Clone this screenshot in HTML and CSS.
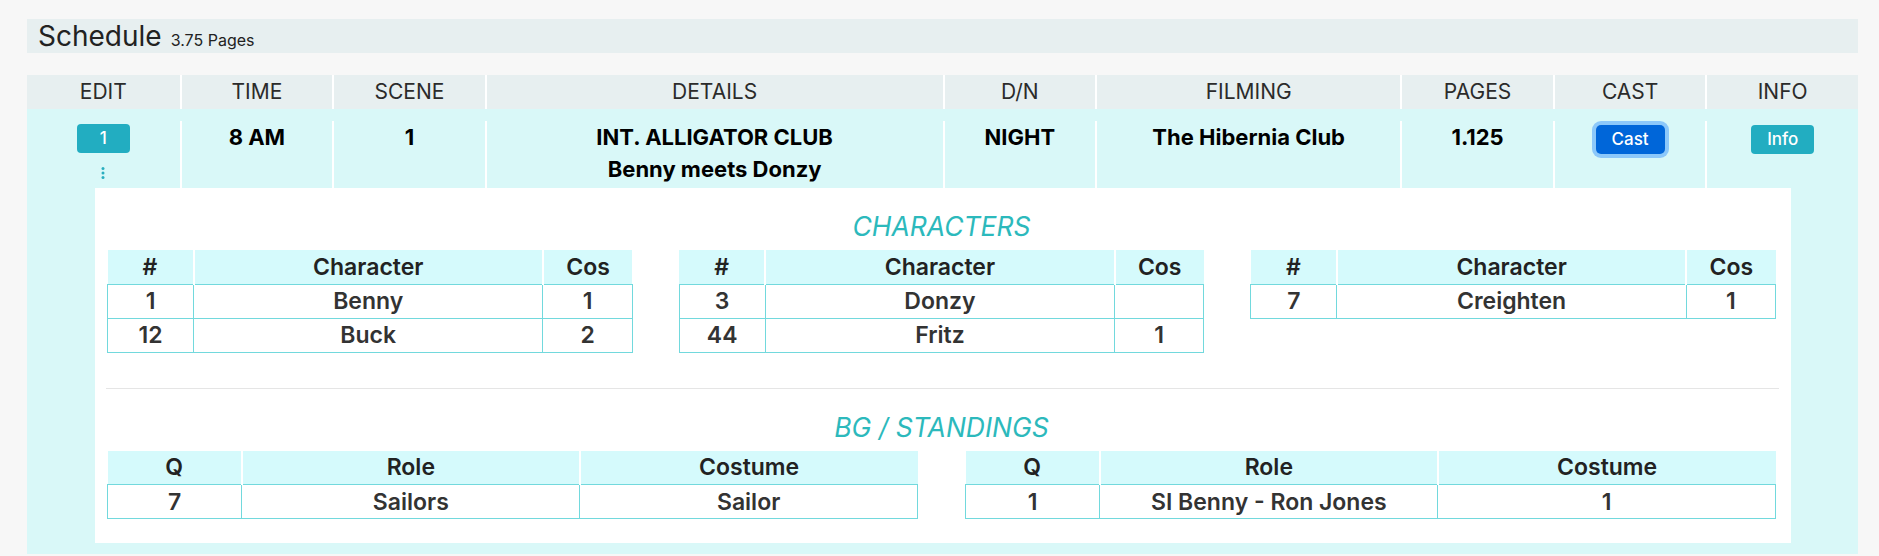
FILE: index.html
```html
<!DOCTYPE html>
<html lang="en">
<head>
<meta charset="utf-8">
<title>Schedule</title>
<link rel="stylesheet" href="styles.css">
</head>
<body>
<div class="page">
  <div class="titlebar"><span class="title">Schedule</span><span class="pages">3.75 Pages</span></div>
  <div class="sched">
    <div class="head-row">
      <div class="hcell">EDIT</div>
      <div class="hcell">TIME</div>
      <div class="hcell">SCENE</div>
      <div class="hcell">DETAILS</div>
      <div class="hcell">D/N</div>
      <div class="hcell">FILMING</div>
      <div class="hcell">PAGES</div>
      <div class="hcell">CAST</div>
      <div class="hcell">INFO</div>
    </div>
    <div class="scene">
      <div class="scene-row">
        <div class="cell cell-edit">
          <button class="btn btn-info btn-num">1</button>
          <svg class="kebab" viewBox="0 0 4 12" width="4" height="12"><circle cx="2" cy="1.6" r="1.5"/><circle cx="2" cy="6" r="1.5"/><circle cx="2" cy="10.4" r="1.5"/></svg>
        </div>
        <div class="cell">8 AM</div>
        <div class="cell">1</div>
        <div class="cell">INT. ALLIGATOR CLUB<br>Benny meets Donzy</div>
        <div class="cell">NIGHT</div>
        <div class="cell">The Hibernia Club</div>
        <div class="cell">1.125</div>
        <div class="cell"><button class="btn btn-primary">Cast</button></div>
        <div class="cell"><button class="btn btn-info">Info</button></div>
      </div>
      <div class="detail-card">
        <h3 class="section-title">CHARACTERS</h3>
        <div class="char-grid">
          <table class="sub">
            <colgroup><col class="c-num"><col class="c-name"><col class="c-cos"></colgroup>
            <thead><tr><th>#</th><th>Character</th><th>Cos</th></tr></thead>
            <tbody>
              <tr><td>1</td><td>Benny</td><td>1</td></tr>
              <tr><td>12</td><td>Buck</td><td>2</td></tr>
            </tbody>
          </table>
          <table class="sub">
            <colgroup><col class="c-num"><col class="c-name"><col class="c-cos"></colgroup>
            <thead><tr><th>#</th><th>Character</th><th>Cos</th></tr></thead>
            <tbody>
              <tr><td>3</td><td>Donzy</td><td></td></tr>
              <tr><td>44</td><td>Fritz</td><td>1</td></tr>
            </tbody>
          </table>
          <table class="sub">
            <colgroup><col class="c-num"><col class="c-name"><col class="c-cos"></colgroup>
            <thead><tr><th>#</th><th>Character</th><th>Cos</th></tr></thead>
            <tbody>
              <tr><td>7</td><td>Creighten</td><td>1</td></tr>
            </tbody>
          </table>
        </div>
        <hr class="divider">
        <h3 class="section-title">BG / STANDINGS</h3>
        <div class="bg-grid">
          <table class="sub">
            <colgroup><col class="c-q"><col class="c-role"><col class="c-cost"></colgroup>
            <thead><tr><th>Q</th><th>Role</th><th>Costume</th></tr></thead>
            <tbody>
              <tr><td>7</td><td>Sailors</td><td>Sailor</td></tr>
            </tbody>
          </table>
          <table class="sub">
            <colgroup><col class="c-q"><col class="c-role"><col class="c-cost"></colgroup>
            <thead><tr><th>Q</th><th>Role</th><th>Costume</th></tr></thead>
            <tbody>
              <tr><td>1</td><td>SI Benny - Ron Jones</td><td>1</td></tr>
            </tbody>
          </table>
        </div>
      </div>
    </div>
  </div>
</div>
</body>
</html>
```
FILE: styles.css
```css
* { box-sizing: border-box; }

body {
  margin: 0;
  background: #f7f7f7;
  font-family: Inter, "DejaVu Sans", sans-serif;
  color: #222;
}

.page {
  padding: 19px 21px 0 27px;
}

.titlebar {
  height: 34px;
  background: #e7eff0;
  padding-left: 11px;
  display: flex;
  align-items: baseline;
  line-height: 34px;
}

.title {
  font-size: 28px;
  font-weight: 400;
  color: #222;
}

.pages {
  font-size: 16px;
  margin-left: 9px;
  color: #222;
}

.head-row,
.scene-row {
  display: grid;
  grid-template-columns: 1fr 1fr 1fr 3fr 1fr 2fr 1fr 1fr 1fr;
}

.head-row {
  margin-top: 22px;
}

.hcell {
  background: #e7eff0;
  height: 34px;
  line-height: 34px;
  text-align: center;
  font-size: 21px;
  color: #2b2b2b;
}

.hcell + .hcell,
.cell + .cell {
  border-left: 2px solid #fff;
}

.scene {
  background: #d9f8f8;
  padding: 12px 0 11px;
}

.cell {
  height: 67px;
  text-align: center;
  font-size: 22px;
  font-weight: 700;
  line-height: 32px;
  color: #000;
}

.cell-edit {
  display: flex;
  flex-direction: column;
  align-items: center;
}

.btn {
  font-family: Inter, "DejaVu Sans", sans-serif;
  font-size: 17px;
  font-weight: 500;
  color: #fff;
  border: 0;
  border-radius: 4px;
  height: 29px;
  line-height: 29px;
  padding: 0 16px;
  margin-top: 3px;
  cursor: pointer;
}

.btn-info {
  background: #22adc1;
}

.btn-num {
  width: 53px;
  padding: 0;
}

.btn-primary {
  background: #0066d9;
  border-radius: 5px;
  box-shadow: 0 0 0 4px #8cc8fa;
}

.kebab {
  display: block;
  margin-top: 14px;
  fill: #2aaebf;
}

.detail-card {
  background: #fff;
  margin: 0 67px 0 68px;
  padding: 23px 15px 24px 12px;
}

.section-title {
  margin: 0 0 8px;
  text-align: center;
  font-size: 26.5px;
  line-height: 31px;
  font-style: italic;
  font-weight: 400;
  color: #2cb9bc;
}

.char-grid {
  display: grid;
  grid-template-columns: repeat(3, 1fr);
  gap: 46px;
  align-items: start;
}

.bg-grid {
  display: grid;
  grid-template-columns: repeat(2, 1fr);
  gap: 47px;
  align-items: start;
}

.divider {
  border: 0;
  border-top: 1px solid #e5e5e5;
  margin: 35px -3px 23px -1px;
}

.sub {
  width: 100%;
  border-collapse: collapse;
  table-layout: fixed;
  font-size: 23px;
  font-weight: 600;
}

.sub th {
  background: #d5fafc;
  height: 34px;
  padding: 0;
  font-weight: 600;
  color: #222;
}

.sub th + th {
  border-left: 2px solid #fff;
}

.sub td {
  border: 1px solid #72d9dd;
  height: 34px;
  padding: 0;
  text-align: center;
  color: #333;
}

.c-num { width: 16.4%; }
.c-name { width: 66.6%; }
.c-cos { width: 17%; }

.c-q { width: 16.6%; }
.c-role { width: 41.7%; }
.c-cost { width: 41.7%; }
```
